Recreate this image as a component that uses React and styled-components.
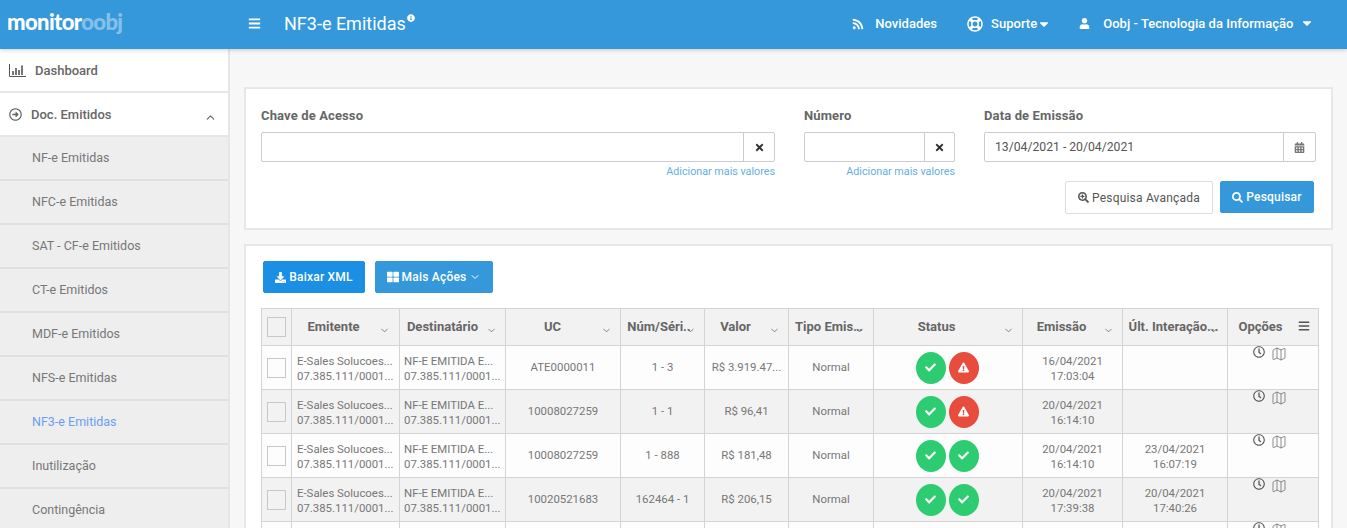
import React from "react";
import styled, { createGlobalStyle } from "styled-components";
import {
  FaRss,
  FaRegLifeRing,
  FaUser,
  FaBars,
  FaCaretDown,
  FaTimes,
  FaCalendarAlt,
  FaSearchPlus,
  FaSearch,
  FaDownload,
  FaThLarge,
  FaCheck,
  FaExclamationTriangle,
  FaRegClock,
  FaInfoCircle,
  FaRegArrowAltCircleRight,
} from "react-icons/fa";
import { ChevronDown, ChevronUp, Map as MapIcon } from "lucide-react";

const GlobalStyle = createGlobalStyle`
  html, body {
    margin: 0;
    height: 528px;
    overflow: hidden;
    background: #f7f7f7;
    font-family: Roboto, "Liberation Sans", sans-serif;
    color: #666;
  }
  * { box-sizing: border-box; }
`;

const Shell = styled.div`
  width: 1347px;
  height: 528px;
  overflow: hidden;
  display: flex;
  flex-direction: column;
`;

const Header = styled.header`
  height: 49px;
  flex: none;
  display: flex;
  align-items: center;
  padding-bottom: 2px;
  background: #3498db;
  color: #fff;
  box-shadow: 0 1px 4px rgba(0, 0, 0, 0.2);
  position: relative;
  z-index: 1;
`;

const Logo = styled.div`
  width: 248px;
  padding: 0 0 4px 7px;
  font-family: Lato, sans-serif;
  font-size: 22px;
  font-weight: 900;
  letter-spacing: -0.6px;
  span { opacity: 0.4; }
`;

const Title = styled.h1`
  margin: 0 0 0 23px;
  font-size: 18px;
  font-weight: 400;
  display: flex;
  align-items: flex-start;
  svg { font-size: 8px; margin: 1px 0 0 1px; }
`;

const Nav = styled.nav`
  margin-left: auto;
  display: flex;
  align-items: center;
  font-size: 13px;
  font-weight: 500;
  letter-spacing: 0.03px;
  padding-right: 33px;
`;

const NavItem = styled.a`
  display: flex;
  align-items: center;
  margin-left: ${({ $gap }) => $gap}px;
  svg { flex: none; }
`;

const NavIcon = styled.span`
  display: flex;
  margin-right: ${({ $gap }) => $gap}px;
`;

const Body = styled.div`
  flex: 1;
  display: flex;
  min-height: 0;
`;

const Sidebar = styled.aside`
  width: 230px;
  flex: none;
  background: #fff;
  border-right: 2px solid #e6e6e6;
`;

const MenuItem = styled.div`
  height: 44px;
  display: flex;
  align-items: center;
  padding: 0 9px;
  font-size: 13px;
  font-weight: 500;
  color: #666;
  border-bottom: 2px solid #e6e6e6;
  svg { flex: none; }
`;

const MenuLabel = styled.span`
  margin-left: ${({ $gap }) => $gap}px;
  flex: 1;
`;

const MenuCaret = styled(ChevronUp)`
  margin: 7px 2px 0 0;
`;

const SubItem = styled.div`
  height: 44px;
  display: flex;
  align-items: center;
  padding: 0 0 2px 32px;
  font-size: 12.5px;
  color: ${({ $active }) => ($active ? "#6a9ff0" : "#777")};
  background: #eee;
  border-bottom: 2px solid #e0e0e0;
`;

const Main = styled.main`
  flex: 1;
  padding: 38px 14px 0 14px;
  min-width: 0;
`;

const Panel = styled.section`
  background: #fff;
  border: 2px solid #e7e7e7;
  padding: ${({ $pad }) => $pad};
  margin-bottom: 14px;
`;

const FilterGrid = styled.div`
  display: grid;
  grid-template-columns: 514px 151px 332px;
  column-gap: 29px;
`;

const Field = styled.div`
  display: flex;
  flex-direction: column;
`;

const Label = styled.label`
  font-size: 13px;
  font-weight: 700;
  letter-spacing: 0.13px;
  color: #666;
  height: 17px;
  line-height: 17px;
  margin-bottom: 8px;
`;

const InputGroup = styled.div`
  display: flex;
  height: 30px;
  border: 1px solid #ccc;
  border-radius: 2px;
`;

const Input = styled.div`
  flex: 1;
  padding-left: 10px;
  font-size: 12.2px;
  line-height: 28px;
  color: #555;
`;

const Addon = styled.span`
  width: ${({ $w }) => $w}px;
  flex: none;
  border-left: 1px solid #ccc;
  display: flex;
  align-items: center;
  justify-content: center;
  color: ${({ $muted }) => ($muted ? "#777" : "#333")};
  font-size: 11px;
`;

const MoreLink = styled.a`
  align-self: flex-end;
  margin-top: 3px;
  font-size: 10.75px;
  line-height: 13px;
  color: #66afe3;
`;

const Actions = styled.div`
  display: flex;
  justify-content: flex-end;
  gap: 7px;
  margin-top: 3px;
  padding-right: 2px;
`;

const Button = styled.button`
  height: 32px;
  width: ${({ $w }) => $w}px;
  display: inline-flex;
  align-items: center;
  justify-content: center;
  gap: 3px;
  padding: 0;
  font-family: inherit;
  font-size: 12px;
  font-weight: 500;
  letter-spacing: 0.2px;
  border-radius: 2px;
  color: #fff;
  background: ${({ $bg }) => $bg};
  border: 1px solid ${({ $bg }) => $bg};
  svg { flex: none; }
`;

const GhostButton = styled(Button)`
  height: 33px;
  font-weight: 400;
  color: #555;
  background: #fff;
  border-color: #ddd;
`;

const Toolbar = styled.div`
  display: flex;
  gap: 10px;
  padding-left: 2px;
  margin-bottom: 15px;
`;

const Table = styled.table`
  width: 1057px;
  table-layout: fixed;
  border-collapse: collapse;
  font-size: 11.4px;
  color: #777;
`;

const Th = styled.th`
  position: relative;
  height: 37px;
  padding: 0;
  background: #f2f2f2;
  border: 1px solid #d4d4d4;
  font-size: 13px;
  font-weight: 700;
  color: #666;
`;

const ThLabel = styled.div`
  padding: ${({ $pl, $pr }) => `0 ${$pr}px 2px ${$pl}px`};
  white-space: nowrap;
  overflow: hidden;
  text-overflow: ellipsis;
  text-align: center;
`;

const SortCaret = styled(ChevronDown)`
  position: absolute;
  right: ${({ $right }) => $right}px;
  top: 16px;
  color: #555;
`;

const ColumnMenu = styled(FaBars)`
  position: absolute;
  right: 8px;
  top: 11px;
  color: #555;
`;

const Tr = styled.tr`
  background: ${({ $even }) => ($even ? "#f2f2f2" : "#fdfdfd")};
`;

const Td = styled.td`
  height: 44px;
  padding: 0 2px;
  border: 1px solid #d4d4d4;
  text-align: center;
  line-height: 15px;
  white-space: nowrap;
  overflow: hidden;
`;

const TextTd = styled(Td)`
  padding: 2px 0 0 ${({ $pl }) => $pl}px;
  text-align: left;
`;

const DateTd = styled(Td)`
  padding-top: 2px;
`;

const CheckTd = styled(Td)`
  padding: 0;
`;

const OptionsTd = styled(Td)`
  vertical-align: top;
`;

const Check = styled.span`
  display: block;
  width: 19px;
  height: 20px;
  margin-left: 5px;
  border: 1px solid #c8c8c8;
`;

const StatusRow = styled.div`
  display: flex;
  justify-content: center;
  gap: 3px;
  padding-right: 2px;
`;

const StatusDot = styled.span`
  width: 30px;
  height: 32px;
  border-radius: 50%;
  display: flex;
  align-items: center;
  justify-content: center;
  color: #fff;
  font-size: 11px;
  background: ${({ $bad }) => ($bad ? "#e74c3c" : "#2ecc71")};
`;

const OptionIcons = styled.div`
  display: flex;
  justify-content: center;
  align-items: flex-start;
  gap: 6px;
  color: #555;
  height: 14px;
  padding-right: 7px;
`;

const DashboardIcon = () => (
  <svg width="17" height="13" viewBox="0 0 17 13" fill="none" stroke="#555">
    <path d="M0.5 0v12.5H17" />
    <path d="M4 11V7M7 11V4M10 11V6M13 11V1.5" strokeWidth="1.6" />
  </svg>
);

const columns = [
  { label: "", w: 30 },
  { label: "Emitente", w: 108, pl: 0, pr: 24, caret: 9 },
  { label: "Destinatário", w: 106, pl: 0, pr: 20, caret: 8 },
  { label: "UC", w: 115, pl: 0, pr: 21, caret: 8 },
  { label: "Núm/Séri..", w: 84, pl: 5, pr: 12, caret: 8 },
  { label: "Valor", w: 84, pl: 0, pr: 22, caret: 8 },
  { label: "Tipo Emissão", w: 85, pl: 6, pr: 5, caret: 8 },
  { label: "Status", w: 149, pl: 0, pr: 23, caret: 8 },
  { label: "Emissão", w: 100, pl: 0, pr: 22, caret: 8 },
  { label: "Últ. Interação...", w: 105, pl: 5, pr: 8, caret: 8 },
  { label: "Opções", w: 91, pl: 0, pr: 25 },
];

const rows = [
  { uc: "ATE0000011", num: "1 - 3", valor: "R$ 3.919.47...", st: true, em: ["16/04/2021", "17:03:04"] },
  { uc: "10008027259", num: "1 - 1", valor: "R$ 96,41", st: true, em: ["20/04/2021", "16:14:10"] },
  { uc: "10008027259", num: "1 - 888", valor: "R$ 181,48", em: ["20/04/2021", "16:14:10"], ult: ["23/04/2021", "16:07:19"] },
  { uc: "10020521683", num: "162464 - 1", valor: "R$ 206,15", em: ["20/04/2021", "17:39:38"], ult: ["20/04/2021", "17:40:26"] },
];

const menu = [
  "NF-e Emitidas",
  "NFC-e Emitidas",
  "SAT - CF-e Emitidos",
  "CT-e Emitidos",
  "MDF-e Emitidos",
  "NFS-e Emitidas",
  "NF3-e Emitidas",
  "Inutilização",
  "Contingência",
];

function TwoLines({ lines }) {
  if (!lines) return null;
  return (
    <>
      {lines[0]}
      <br />
      {lines[1]}
    </>
  );
}

function RowOptions() {
  return (
    <OptionsTd>
      <OptionIcons>
        <FaRegClock size={12} />
        <MapIcon size={16} strokeWidth={1} />
      </OptionIcons>
    </OptionsTd>
  );
}

export default function App() {
  return (
    <Shell>
      <GlobalStyle />
      <Header>
        <Logo>
          monitor<span>oobj</span>
        </Logo>
        <FaBars size={13} />
        <Title>
          NF3-e Emitidas
          <FaInfoCircle />
        </Title>
        <Nav>
          <NavItem $gap={0}>
            <NavIcon $gap={11}><FaRss size={12} /></NavIcon>
            Novidades
          </NavItem>
          <NavItem $gap={30}>
            <NavIcon $gap={8}><FaRegLifeRing size={16} /></NavIcon>
            Suporte
            <FaCaretDown size={14} />
          </NavItem>
          <NavItem $gap={28}>
            <NavIcon $gap={13}><FaUser size={11} /></NavIcon>
            Oobj - Tecnologia da Informação
            <NavIcon $gap={0}>&nbsp;&nbsp;<FaCaretDown size={14} /></NavIcon>
          </NavItem>
        </Nav>
      </Header>
      <Body>
        <Sidebar>
          <MenuItem>
            <DashboardIcon />
            <MenuLabel $gap={9}>Dashboard</MenuLabel>
          </MenuItem>
          <MenuItem>
            <FaRegArrowAltCircleRight size={13} />
            <MenuLabel $gap={9}>Doc. Emitidos</MenuLabel>
            <MenuCaret size={13} />
          </MenuItem>
          {menu.map((name) => (
            <SubItem key={name} $active={name === "NF3-e Emitidas"}>
              {name}
            </SubItem>
          ))}
        </Sidebar>
        <Main>
          <Panel $pad="18px 15px 14px">
            <FilterGrid>
              <Field>
                <Label>Chave de Acesso</Label>
                <InputGroup>
                  <Input />
                  <Addon $w={31}><FaTimes /></Addon>
                </InputGroup>
                <MoreLink>Adicionar mais valores</MoreLink>
              </Field>
              <Field>
                <Label>Número</Label>
                <InputGroup>
                  <Input />
                  <Addon $w={30}><FaTimes /></Addon>
                </InputGroup>
                <MoreLink>Adicionar mais valores</MoreLink>
              </Field>
              <Field>
                <Label>Data de Emissão</Label>
                <InputGroup>
                  <Input>13/04/2021 - 20/04/2021</Input>
                  <Addon $w={32} $muted><FaCalendarAlt /></Addon>
                </InputGroup>
              </Field>
            </FilterGrid>
            <Actions>
              <GhostButton $w={148}>
                <FaSearchPlus size={11} />
                Pesquisa Avançada
              </GhostButton>
              <Button $w={94} $bg="#3498db">
                <FaSearch size={11} />
                Pesquisar
              </Button>
            </Actions>
          </Panel>
          <Panel $pad="15px 15px 0">
            <Toolbar>
              <Button $w={102} $bg="#1a8fe3">
                <FaDownload size={11} />
                Baixar XML
              </Button>
              <Button $w={118} $bg="#3498db">
                <FaThLarge size={12} />
                Mais Ações
                <ChevronDown size={12} />
              </Button>
            </Toolbar>
            <Table>
              <colgroup>
                {columns.map((c) => (
                  <col key={c.label} width={c.w} />
                ))}
              </colgroup>
              <thead>
                <tr>
                  {columns.map((c, i) => (
                    <Th key={c.label}>
                      {i === 0 ? (
                        <Check />
                      ) : (
                        <>
                          <ThLabel $pl={c.pl} $pr={c.pr}>{c.label}</ThLabel>
                          {c.caret ? (
                            <SortCaret size={11} strokeWidth={1.5} $right={c.caret} />
                          ) : (
                            <ColumnMenu size={12} />
                          )}
                        </>
                      )}
                    </Th>
                  ))}
                </tr>
              </thead>
              <tbody>
                {rows.map((r, i) => (
                  <Tr key={i} $even={i % 2 === 1}>
                    <CheckTd><Check /></CheckTd>
                    <TextTd $pl={5}>E-Sales Solucoes...<br />07.385.111/0001...</TextTd>
                    <TextTd $pl={4}>NF-E EMITIDA E...<br />07.385.111/0001...</TextTd>
                    <Td>{r.uc}</Td>
                    <Td>{r.num}</Td>
                    <Td>{r.valor}</Td>
                    <Td>Normal</Td>
                    <Td>
                      <StatusRow>
                        <StatusDot><FaCheck /></StatusDot>
                        <StatusDot $bad={r.st}>
                          {r.st ? <FaExclamationTriangle /> : <FaCheck />}
                        </StatusDot>
                      </StatusRow>
                    </Td>
                    <DateTd><TwoLines lines={r.em} /></DateTd>
                    <DateTd><TwoLines lines={r.ult} /></DateTd>
                    <RowOptions />
                  </Tr>
                ))}
                <Tr>
                  {columns.slice(0, -1).map((c) => (
                    <Td key={c.label} />
                  ))}
                  <RowOptions />
                </Tr>
              </tbody>
            </Table>
          </Panel>
        </Main>
      </Body>
    </Shell>
  );
}
